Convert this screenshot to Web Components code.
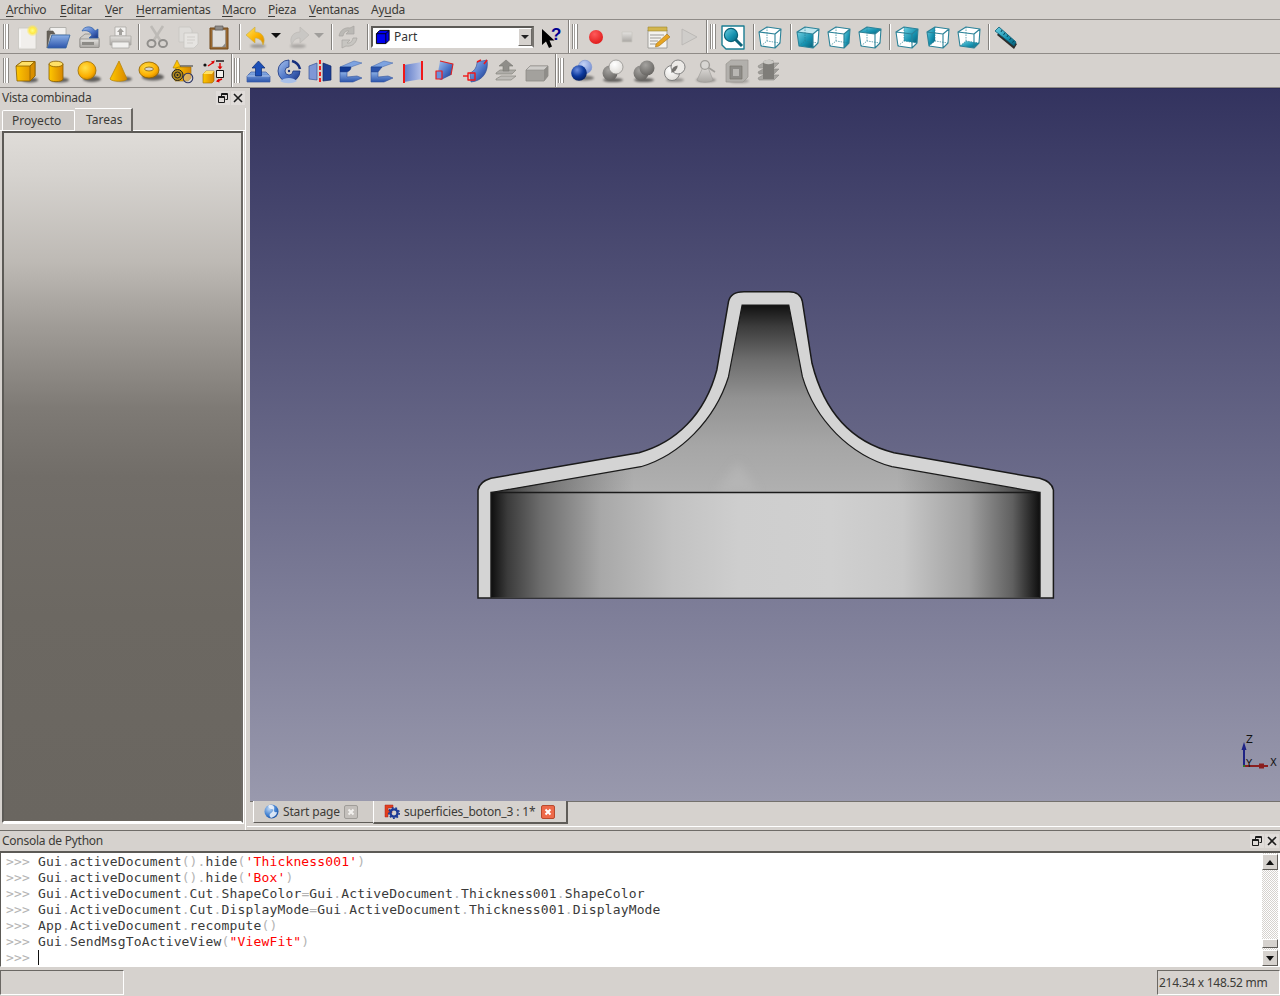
<!DOCTYPE html>
<html lang="es"><head><meta charset="utf-8"><title>FreeCAD</title>
<style>
html,body{margin:0;padding:0;background:#d6d2ce}
body{width:1280px;height:996px;overflow:hidden;font:12px "Noto Sans",sans-serif;color:#3c3b37}
</style></head><body>
<fc-app>
  <fc-menubar items="Archivo:0:54,Editar:0:45,Ver:0:31,Herramientas:0:86,Macro:0:46,Pieza:0:41,Ventanas:0:62,Ayuda:2:40"></fc-menubar>
  <fc-toolbar-row>
    <fc-handle w="12" pad="3"></fc-handle>
    <fc-tool icon="new"></fc-tool><fc-tool icon="open"></fc-tool><fc-tool icon="save"></fc-tool><fc-tool icon="print"></fc-tool>
    <fc-sep w="6" at="2"></fc-sep>
    <fc-tool icon="cut"></fc-tool><fc-tool icon="copy"></fc-tool><fc-tool icon="paste"></fc-tool>
    <fc-sep w="8" at="4"></fc-sep>
    <fc-tool icon="undo" w="26"></fc-tool><fc-tool icon="arrowblack" w="17" small></fc-tool>
    <fc-tool icon="redo" w="26"></fc-tool><fc-tool icon="arrowgrey" w="17" small></fc-tool>
    <fc-sep w="4" at="2"></fc-sep>
    <fc-tool icon="refresh" w="30"></fc-tool>
    <fc-sep w="8" at="4"></fc-sep>
    <fc-combo>Part</fc-combo>
    <fc-tool icon="whatsthis" w="34"></fc-tool>
    <fc-sep w="2" at="0" full></fc-sep>
    <fc-handle w="11" pad="2"></fc-handle>
    <fc-tool icon="record"></fc-tool><fc-tool icon="stop"></fc-tool><fc-tool icon="macro"></fc-tool><fc-tool icon="play"></fc-tool>
    <fc-sep w="2" at="1" full></fc-sep>
    <fc-handle w="11" pad="3"></fc-handle>
    <fc-tool icon="fit"></fc-tool>
    <fc-sep w="6" at="4"></fc-sep>
    <fc-tool icon="iso"></fc-tool>
    <fc-sep w="7" at="4"></fc-sep>
    <fc-tool icon="cfront"></fc-tool><fc-tool icon="cright"></fc-tool><fc-tool icon="ctop"></fc-tool>
    <fc-sep w="6" at="3"></fc-sep>
    <fc-tool icon="crear"></fc-tool><fc-tool icon="cleft"></fc-tool><fc-tool icon="cbottom"></fc-tool>
    <fc-sep w="6" at="3"></fc-sep>
    <fc-tool icon="ruler"></fc-tool>
  </fc-toolbar-row>
  <fc-toolbar-row>
    <fc-handle w="12" pad="3"></fc-handle>
    <fc-tool icon="box"></fc-tool><fc-tool icon="cyl"></fc-tool><fc-tool icon="sphere"></fc-tool><fc-tool icon="cone"></fc-tool><fc-tool icon="torus"></fc-tool><fc-tool icon="prims"></fc-tool><fc-tool icon="builder"></fc-tool>
    <fc-sep w="4" at="2" full></fc-sep>
    <fc-handle w="10" pad="1"></fc-handle>
    <fc-tool icon="extrude"></fc-tool><fc-tool icon="revolve"></fc-tool><fc-tool icon="mirror"></fc-tool><fc-tool icon="fillet"></fc-tool><fc-tool icon="chamfer"></fc-tool><fc-tool icon="ruled"></fc-tool><fc-tool icon="loft"></fc-tool><fc-tool icon="sweep"></fc-tool><fc-tool icon="offset"></fc-tool><fc-tool icon="section"></fc-tool>
    <fc-sep w="4" at="2" full></fc-sep>
    <fc-handle w="10" pad="1"></fc-handle>
    <fc-tool icon="bool"></fc-tool><fc-tool icon="bcut"></fc-tool><fc-tool icon="bunion"></fc-tool><fc-tool icon="bint"></fc-tool><fc-tool icon="check"></fc-tool><fc-tool icon="thick"></fc-tool><fc-tool icon="stack"></fc-tool>
  </fc-toolbar-row>
  <fc-workspace>
    <fc-combi-dock slot="left"></fc-combi-dock>
    <fc-viewer slot="view"></fc-viewer>
    <fc-doc-tabs slot="tabs"></fc-doc-tabs>
  </fc-workspace>
  <fc-dock-title>Consola de Python</fc-dock-title>
  <fc-console></fc-console>
  <fc-statusbar>214.34 x 148.52 mm</fc-statusbar>
</fc-app>
<script>
const DEFS=`<defs>
<linearGradient id="y" x1="0" y1="0" x2="1" y2="1"><stop offset="0" stop-color="#ffe566"/><stop offset=".55" stop-color="#fdb300"/><stop offset="1" stop-color="#d98a00"/></linearGradient>
<linearGradient id="yd" x1="0" y1="0" x2="1" y2="0"><stop offset="0" stop-color="#ffc800"/><stop offset="1" stop-color="#d88600"/></linearGradient>
<radialGradient id="ys" cx=".4" cy=".35" r=".7"><stop offset="0" stop-color="#ffe14a"/><stop offset=".7" stop-color="#fcae00"/><stop offset="1" stop-color="#c98200"/></radialGradient>
<linearGradient id="b" x1="0" y1="0" x2="1" y2="1"><stop offset="0" stop-color="#aac4ee"/><stop offset=".55" stop-color="#4b73c6"/><stop offset="1" stop-color="#17307e"/></linearGradient>
<linearGradient id="bv" x1="0" y1="0" x2="0" y2="1"><stop offset="0" stop-color="#8bb0e6"/><stop offset="1" stop-color="#2c55ac"/></linearGradient>
<linearGradient id="bh" x1="0" y1="0" x2="1" y2="0"><stop offset="0" stop-color="#5f7cc8"/><stop offset="1" stop-color="#b7c3ea"/></linearGradient>
<radialGradient id="bs" cx=".38" cy=".3" r=".75"><stop offset="0" stop-color="#6d8fe0"/><stop offset=".55" stop-color="#0d3a9e"/><stop offset="1" stop-color="#051c5a"/></radialGradient>
<radialGradient id="ls" cx=".4" cy=".3" r=".8"><stop offset="0" stop-color="#c5d3f5"/><stop offset="1" stop-color="#6a86cf"/></radialGradient>
<linearGradient id="t" x1="0" y1="0" x2="1" y2="1"><stop offset="0" stop-color="#6fd0e2"/><stop offset=".6" stop-color="#1490ae"/><stop offset="1" stop-color="#0a5f78"/></linearGradient>
<linearGradient id="g" x1="0" y1="0" x2="0" y2="1"><stop offset="0" stop-color="#e4e2df"/><stop offset="1" stop-color="#a9a6a2"/></linearGradient>
<radialGradient id="gs" cx=".4" cy=".3" r=".8"><stop offset="0" stop-color="#a5a3a0"/><stop offset="1" stop-color="#5f5d5a"/></radialGradient>
<radialGradient id="ws" cx=".4" cy=".3" r=".8"><stop offset="0" stop-color="#fff"/><stop offset="1" stop-color="#dcd9d4"/></radialGradient>
<radialGradient id="rd" cx=".4" cy=".3" r=".8"><stop offset="0" stop-color="#ff5a5a"/><stop offset="1" stop-color="#dc1414"/></radialGradient>
<radialGradient id="glow"><stop offset="0" stop-color="#ffff80"/><stop offset=".5" stop-color="#ffe94a"/><stop offset="1" stop-color="#ffe94a" stop-opacity="0"/></radialGradient>
<filter id="sh" x="-50%" y="-50%" width="200%" height="200%"><feGaussianBlur stdDeviation="1"/></filter>
</defs>`;
const sh=(cx,cy,rx,ry,o=.55)=>`<ellipse cx="${cx}" cy="${cy}" rx="${rx}" ry="${ry}" fill="#000" opacity="${o}" filter="url(#sh)"/>`;
const P=(d,f,s='none',w=1,x='')=>`<path d="${d}" fill="${f}" stroke="${s}" stroke-width="${w}" stroke-linejoin="round" ${x}/>`;
const L=s=>`<g transform="translate(-1 0)">${s}</g>`;
const cubeWire=(face)=>{
  const F={front:'M1 7L17 9V23L3 21Z',top:'M1 7L9 2L23 4L17 9Z',right:'M17 9L23 4L22 18L17 23Z',rear:'M9 2L23 4L22 18L9 16Z',left:'M1 7L9 2L9 16L3 21Z',bottom:'M3 21L9 16L22 18L17 23Z'};
  let extra=face==='front'?P('M1 7L9 2L23 4L17 9Z','#bfe6ee'):'';
  return `<path d="M1 7L9 2L23 4L22 18L17 23L3 21Z" fill="#fff"/>${extra}${face?P(F[face],'url(#t)'):''}
  <path d="M9 2V16M3 21L9 16L22 18" fill="none" stroke="#2a7f95" stroke-width=".7" stroke-dasharray="1.5 1"/>
  <path d="M1 7L9 2L23 4L22 18L17 23L3 21ZM1 7L17 9L23 4M17 9V23" fill="none" stroke="#2b8298" stroke-width="1.1" stroke-linejoin="round"/>`;
};
const I={
new:`${P('M3.5 3H21V24H3.5Z','#f1efec','#c9c6c1',.8)}<path d="M5 5V22" stroke="#fff"/><circle cx="17.5" cy="5.5" r="6" fill="url(#glow)"/>`,
open:`${P('M2 7L4 3H19V10H5Z','#cfcdca','#8a8884',.8)}${P('M4 2.5H20V10H4Z','#f2f1ef','#a5a39f',.7)}${P('M1 6H7L9 9H4L1 23Z','#66615a','#55514b',.5)}${P('M6 10H24L20 23H1.5Z','url(#bv)','#33639e',.8)}`,
save:`${P('M3 13L8 9H17L22 13V22H3Z','#cfcdc9','#8e8c88',.8)}${P('M3 14H22V22.5H3Z','url(#g)','#8e8c88',.8)}<rect x="5" y="17" width="12" height="3" fill="#8c8a86"/>${P('M5 6C7 1 15 0 18 6L21 4V13H12L15 10C13 6 9 5 5 6Z','url(#b)','#2d5fa8',.7)}`,
print:`${P('M7 2H18V11H7Z','#f3f2f0','#a9a7a3',.8)}${P('M12.5 3L16 7H14V10H11V7H9Z','#a3a19d')}${P('M2 11H23V20H2Z','url(#g)','#a9a7a3',.8)}${P('M4 17H21V23H4Z','#f1f0ee','#a9a7a3',.8)}`,
cut:`<g opacity=".95">${P('M6 1L15 15','none','#bcb9b5',2.6)}${P('M18 1L9 15','none','#bcb9b5',2.6)}<ellipse cx="6.5" cy="18.5" rx="4" ry="3.6" fill="none" stroke="#8d8b88" stroke-width="2"/><ellipse cx="18" cy="18.5" rx="4" ry="3.6" fill="none" stroke="#8d8b88" stroke-width="2"/></g>`,
copy:`${P('M3 2H14L16 5V17H3Z','#dedcd9','#c8c5c1',.8)}${P('M8 8H22V19L18 23H8Z','#e6e4e1','#c8c5c1',.8)}<path d="M11 12H19M11 15H19M11 18H17" stroke="#d0cdc9"/>`,
paste:`${P('M3 3H21V24H3Z','#9a6a32','#70481a',1)}${P('M5.5 5H18.5V22H5.5Z','#dfdedb','#8a8884',.5)}${P('M8 1H16V5H8Z','#8f8d8a','#5c5a57',.7)}${P('M15 22L18.5 18V22Z','#8b8986')}`,
undo:`${sh(14,21,8,2,.25)}${P('M11 2L2 10L11 18V13C15 13 18 15 19 20C22 14 19 7 11 7Z','url(#y)','#c9b04a',.7)}`,
redo:`${sh(11,21,8,2,.2)}${P('M13 2L22 10L13 18V13C9 13 6 15 5 20C2 14 5 7 13 7Z','#c9c7c4','#bbb9b5',.7)}`,
arrowblack:`${P('M0 0H10L5 5Z','#111')}`,
arrowgrey:`${P('M0 0H10L5 5Z','#a09e9b')}`,
refresh:`${P('M3 11C4 5 9 2 14 3L18 1V9H10L13 6C10 5.5 8 7 7 11Z','#bbb9b5','#a7a5a1',.7)}${P('M21 13C20 19 15 22 10 21L6 23V15H14L11 18C14 18.5 16 17 17 13Z','#c7c5c1','#a7a5a1',.7)}`,
part:`${P('M1.5 5L5 1.5H15V12L11.5 15.5H1.5Z','#0000f0','#000',1)}${P('M1.5 5H11.5V15.5','none','#000',.9)}<path d="M11.5 5L15 1.5" stroke="#000"/>`,
whatsthis:`${P('M3 4V20L7 16.5L10 23L13 21.5L10.5 15.5H15.5Z','#000')}<text x="12" y="15" font-family="Liberation Sans" font-weight="700" font-size="17" fill="#000090">?</text>`,
record:`<circle cx="12" cy="12" r="7" fill="url(#rd)"/>`,
stop:`${P('M7 7H17V17H7Z','url(#g)','#c9c6c2',.8)}`,
macro:`${P('M2 5H21V23H2Z','#f4f3f0','#9a9894',.9)}${P('M2 2H21V6H2Z','#d3b64d','#9c8730',.6)}<path d="M4 10H18M4 13H15M4 16H12M4 19H10" stroke="#9d9b97"/>${P('M10 19L21 9L24 12L13 21L9.5 22Z','#e7a523','#a0701a',.6)}`,
play:`${P('M5 4L20 12L5 20Z','#cfcdca','#b9b7b3',.9)}`,
fit:`${P('M1 1H23V24H5L1 20Z','#fff','#1a7d92',1.4)}<circle cx="10" cy="10" r="6.6" fill="url(#t)" stroke="#0a6278" stroke-width="1.2"/>${P('M14.5 14.5L21 21','none','#0a6278',3)}`,
iso:cubeWire(''),cfront:cubeWire('front'),cright:cubeWire('right'),ctop:cubeWire('top'),crear:cubeWire('rear'),cleft:cubeWire('left'),cbottom:cubeWire('bottom'),
ruler:`${P('M6 6L23 19L20 24L3 10Z','#2e2c2a')}${P('M5 2L22 17L20 21L1 6Z','url(#t)','#0a5c74',.8)}<path d="M8 5L7 7M11 7.6L9.5 10M14 10.2L13 12M17 13L15.5 15M20 15.6L18.5 17.6" stroke="#063d50" stroke-width=".9"/>`,
box:L(`${sh(16,21,8,2.5)}${P('M2 7L8 2.5H21V17L16 22H3Z','url(#yd)','#8a5f00',.8)}${P('M2 7L8 2.5H21L16 7Z','#ffe066','#8a5f00',.8)}${P('M16 7V22L21 17V2.5Z','#d98f00','#8a5f00',.8)}`),
cyl:L(`${sh(15,21,9,2.5)}${P('M4 5V20C4 23.5 18 23.5 18 20V5Z','url(#yd)','#8a5f00',.8)}<ellipse cx="11" cy="5" rx="7" ry="2.8" fill="#ffe066" stroke="#8a5f00" stroke-width=".8"/>`),
sphere:L(`${sh(16,20,9,3)}<circle cx="11" cy="11.5" r="9" fill="url(#ys)" stroke="#9a6c00" stroke-width=".8"/>`),
cone:L(`${sh(16,20,9,2.5)}${P('M12 2L3 20C5 23 18 23 20 20Z','url(#yd)','#b8860b',.8)}`),
torus:L(`${sh(15,18,11,3.6)}<ellipse cx="11" cy="11" rx="10" ry="8" fill="url(#ys)" stroke="#8a5f00" stroke-width=".8"/><ellipse cx="11" cy="10" rx="4.4" ry="2" fill="#d8d4cf" stroke="#8a5f00" stroke-width=".8"/>`),
prims:`${P('M7 1L3 9H11Z','#ffc400','#a87a00',.6)}<path d="M10 7H23" stroke="#333" stroke-width="1"/>${P('M5 10L8 8H21V19L18 22H5Z','url(#yd)','#9a6c00',.6)}<circle cx="7.5" cy="16" r="5.5" fill="#b08a1e" stroke="#222"/><circle cx="7.5" cy="16" r="3" fill="none" stroke="#222"/><circle cx="7.5" cy="16" r="1" fill="#222"/><circle cx="18" cy="19" r="4.8" fill="#d4d0cb" fill-opacity=".45" stroke="#2c3566" stroke-width="1.1"/>`,
builder:`${P('M2 15L5 12H13V22L11 24H2Z','url(#yd)','#9a6c00',.6)}${P('M2 15L5 12H13L11 15Z','#ffe066')}<circle cx="4" cy="6" r="1.6" fill="#111"/>${P('M7 7L13 3','none','#e00000',1.4)}${P('M14 1.5L12 5L10 2.5Z','#e00000')}${P('M15 2H23','none','#111',1.4)}${P('M19 4V8','none','#e00000',1.4)}${P('M16.5 7.5H21.5L19 10.5Z','#e00000')}${P('M15.5 11.5H22.5V18.5H15.5Z','#f2f0ed','#111',1)}${P('M16 22L21 20','none','#e00000',1.4)}${P('M15 22.5L18 19.5L18.5 23.5Z','#e00000')}`,
extrude:`${P('M1 17L5 13H20L24 17V23H1Z','url(#bv)','#3a5aa0',.7)}${P('M1 17H24','none','#c5d5f2',.8)}${P('M12.5 2L19 9H15.5V17H9.5V9H6Z','#1d50b8','#0d2c74',.7)}`,
revolve:`${P('M12 1A11 11 0 1 0 23 12H16A4 4 0 1 1 12 8Z','url(#b)','#18347e',.8)}<path d="M3 22C8 18 16 18 20 22C15 25 8 25 3 22Z" fill="#a9c0e8"/><path d="M15 2C19 3 22 6 23 10" stroke="#17307e" stroke-width="2.6" fill="none"/><circle cx="12" cy="12" r="1.2" fill="#17307e"/>`,
mirror:`${P('M1 7L9 4V21L1 20Z','#7f97d6','#33539a',.7)}${P('M15 4L23 7V21L15 22Z','#1e3f94','#0e2668',.7)}<path d="M12 1V24" stroke="#f02020" stroke-width="2" stroke-dasharray="4 2"/>`,
fillet:`${P('M1 8L15 2L23 4L12 8Z','#7ea3e0','#3b60aa',.5)}${P('M1 8H12C12 11 10 12 8 13H1Z','#123a94','#0e2c78',.5)}${P('M1 13H8V18L18 17L23 19L14 23H1Z','url(#bv)','#33539a',.6)}`,
chamfer:`${P('M1 8L14 2L23 4L12 8Z','#7ea3e0','#3b60aa',.5)}${P('M1 8H12L8 13H1Z','#2b54ac','#1b3c8a',.5)}${P('M1 13H8V18L18 17L23 19L14 23H1Z','url(#bv)','#33539a',.6)}`,
ruled:`${P('M3 6L21 3V20L3 23Z','url(#bh)')}<path d="M3 5V24M21 2V21" stroke="#f01818" stroke-width="2"/>`,
loft:`${P('M8 2L21 5L19 16L9 21L5 19Z','url(#b)')}${P('M8 2L21 5L19 16','none','#e02020',1.1)}${P('M4 12H10V20H4Z','#6a92dc','#f01818',1.2)}`,
sweep:`${P('M7 14C12 12 14 7 14 3L24 1C26 12 20 22 8 23Z','url(#b)','#2d4a92',.6)}<path d="M14 3L18 1M24 1L21 5" stroke="#f01818" stroke-width="1.5" fill="none"/><path d="M0 17H5" stroke="#f01818" stroke-width="1.4"/>${P('M5 14H12V21H5Z','none','#f01818',1.4)}`,
offset:`${P('M2 20L7 17H22L17 21H2Z','#bdbbb7','#88867f',.7)}${P('M2 14L6 11H22L18 15H2Z','#aeaca8','#88867f',.7)}${P('M12 1L19 7H15V12H9V7H5Z','#8f8d89','#7a7874',.6)}`,
section:`${P('M1 11L5 7H23V17L19 22H1Z','#a3a19d','#8d8b87',.8)}${P('M1 11L5 7H23L19 11Z','#cfcdca','#8d8b87',.6)}${P('M19 11V22L23 17V7Z','#8f8d89')}`,
bool:`<circle cx="15" cy="8" r="6.8" fill="url(#ls)" stroke="#7b93d0" stroke-width=".6"/>${sh(14,19,10,2.5,.45)}<circle cx="9" cy="14" r="7.8" fill="url(#bs)"/>`,
bcut:`${sh(12,21,10,2)}<circle cx="9" cy="14" r="7.5" fill="url(#gs)"/><circle cx="15" cy="8" r="7" fill="url(#ws)" stroke="#8a8885" stroke-width=".7"/>`,
bunion:`${sh(12,21,10,2)}<circle cx="9" cy="14" r="7.5" fill="url(#gs)"/><circle cx="15" cy="9" r="7.5" fill="url(#gs)"/>`,
bint:`${sh(12,21,9,2,.3)}<circle cx="9" cy="14" r="7.5" fill="url(#ws)" stroke="#777" stroke-width=".9"/><circle cx="15" cy="8" r="7" fill="#eceae7" stroke="#777" stroke-width=".9"/><path d="M14.7 6.5A7 7 0 0 0 8.2 13.8A7.5 7.5 0 0 0 14.7 6.5Z" fill="#73716e"/>`,
check:`${sh(12,21,10,2,.35)}${P('M10 6L3 21C6 24 16 24 19 21L13 6Z','url(#g)','#9a9895',.6)}<circle cx="11" cy="6" r="4.4" fill="#d8d6d3" stroke="#a09e9a" stroke-width="1.4"/><path d="M15 9L21 13" stroke="#a09e9a" stroke-width="1.6"/>`,
thick:`${sh(14,22,10,2,.25)}${P('M1 5L6 1H23V18L18 23H1Z','#b2b0ac','#98968f',.7)}${P('M5 7H17V20H5Z','#8e8c88','#79776f',.7)}${P('M8 10H14V17H8Z','#b9b7b3')}`,
stack:`${P('M2 7L7 4H23L18 9H3Z','#a8a6a2','#8c8a86',.6)}${P('M2 13L7 10H23L18 15H3Z','#9e9c98','#8c8a86',.6)}${P('M2 19L7 16H23L18 21H3Z','#a8a6a2','#8c8a86',.6)}<path d="M7 3C9 0 18 0 18 3V20H7Z" fill="#7f7d79"/><ellipse cx="12.5" cy="3" rx="5.5" ry="2.2" fill="#c9c7c3"/>`
};
const icon=(n,s=24,vb=24)=>`<svg xmlns="http://www.w3.org/2000/svg" width="${s}" height="${s}" viewBox="0 0 ${vb} ${vb}" style="display:block;overflow:visible">${DEFS}${I[n]}</svg>`;

class Shadow extends HTMLElement{
  connectedCallback(){ if(!this.shadowRoot){ this.attachShadow({mode:'open'}).innerHTML=this.render(); } }
}
const def=(name,render)=>customElements.define(name,class extends Shadow{render(){return render.call(this)}});
const bg='#d6d2ce';

def('fc-app',()=>`<style>:host{display:flex;flex-direction:column;width:1280px;height:996px;background:${bg};overflow:hidden}</style><slot></slot>`);

def('fc-menubar',function(){
  const items=this.getAttribute('items').split(',').map(s=>{const [t,u,w]=s.split(':');
    const i=+u;return `<span style="width:${w}px">${t.slice(0,i)}<u>${t[i]}</u>${t.slice(i+1)}</span>`}).join('');
  return `<style>:host{display:flex;height:19px;padding-left:6px;border-bottom:1px solid #8f8b87;font:12px/19px "Noto Sans",sans-serif;color:#3c3b37;box-sizing:content-box;letter-spacing:-.25px}
  span{flex:none;display:block;white-space:nowrap}u{text-underline-offset:2px}</style>${items}`;
});

def('fc-toolbar-row',()=>`<style>:host{display:flex;align-items:center;height:33px;border-bottom:1px solid #8f8b87;flex:none}</style><slot></slot>`);

def('fc-handle',function(){
  const w=this.getAttribute('w'),p=this.getAttribute('pad');
  return `<style>:host{display:block;flex:none;width:${w}px;box-sizing:border-box;padding-left:${p}px}
  div{width:6px;height:25px;box-sizing:border-box;border-left:1px solid #8d8a86;border-right:1px solid #8d8a86;background:linear-gradient(90deg,#fff 0 1.5px,#a3a09c 1.5px 2.5px,#fff 2.5px 4px)}</style><div></div>`;
});

def('fc-sep',function(){
  const w=this.getAttribute('w'),a=this.getAttribute('at');
  const full=this.hasAttribute('full');
  return `<style>:host{display:block;flex:none;width:${w}px;height:${full?33:26}px;position:relative}
  i{display:block;position:absolute;left:${a}px;top:0;bottom:0;width:1px;background:#84817d;box-shadow:1px 0 0 #fff}</style><i></i>`;
});

def('fc-tool',function(){
  const w=+(this.getAttribute('w')||31), n=this.getAttribute('icon');
  const small=this.hasAttribute('small');
  const pad=small?Math.floor((w-10)/2)-1:Math.floor((w-24)/2);
  return `<style>:host{display:flex;align-items:center;flex:none;width:${w}px;height:24px;box-sizing:border-box;padding-left:${pad}px}</style>${small?`<svg width="10" height="5" viewBox="0 0 10 5" style="display:block;margin-top:-2px">${I[n]}</svg>`:icon(n)}`;
});

def('fc-combo',function(){
  return `<style>:host{display:flex;align-items:center;flex:none;width:163px;height:22px;box-sizing:border-box;background:#fff;border:2px solid;border-color:#5c5a56 #77746f #fff #5c5a56;font:12px "Noto Sans",sans-serif;color:#333;position:relative}
  .ic{margin-left:2px;margin-right:3px}
  .txt{flex:1}
  .btn{width:14px;height:18px;box-sizing:border-box;background:${bg};border:1px solid;border-color:#fff #6b6864 #6b6864 #fff;display:flex;align-items:center;justify-content:center}
  .btn i{width:0;height:0;border:4px solid transparent;border-top:4px solid #222;border-bottom:0;display:block}</style>
  <span class="ic">${icon('part',16,17)}</span><span class="txt"><slot></slot></span><span class="btn"><i></i></span>`;
});

def('fc-workspace',()=>`<style>:host{display:grid;grid-template-columns:250px 1fr;grid-template-rows:713px 29px;flex:none;border-bottom:1px solid #6f6c68;box-sizing:border-box;height:743px}
  .l{grid-row:1/3;grid-column:1;display:flex;min-height:0}
  ::slotted(fc-viewer){grid-column:2;grid-row:1}::slotted(fc-doc-tabs){grid-column:2;grid-row:2}
  </style><div class="l"><slot name="left"></slot></div><slot name="view"></slot><slot name="tabs"></slot>`);

def('fc-dock-title',function(){
  return `<style>:host{display:flex;align-items:center;flex:none;height:20px;padding-left:2px;font:12px "Noto Sans",sans-serif;letter-spacing:-.25px;color:#3c3b37;position:relative}
  .t{flex:1;line-height:20px}
  .b{display:flex;gap:1px;padding-right:1px}
  .b span{display:block;width:14px;height:14px;background:#e0dcd9;display:flex;align-items:center;justify-content:center}</style>
  <span class="t"><slot></slot></span><span class="b">
  <span><svg width="10" height="10" viewBox="0 0 10 10"><path d="M3.5 .5H9.5V6.5H7.5M.5 3.5H6.5V9.5H.5ZM3.5 .5V3.5M.5 3.5V5M.5 4.5H6.5M3.5 1.5H9.5" fill="none" stroke="#1c1c1c"/></svg></span>
  <span><svg width="10" height="10" viewBox="0 0 10 10"><path d="M1 1L9 9M9 1L1 9" stroke="#1c1c1c" stroke-width="1.6"/></svg></span></span>`;
});

def('fc-combi-dock',()=>`<style>:host{display:flex;flex-direction:column;width:250px;box-sizing:border-box;border-right:4px solid ${bg};position:relative;font:12px "Noto Sans",sans-serif;color:#3c3b37}
  .tabs{display:flex;height:23px;align-items:flex-end;box-sizing:border-box;padding-left:2px;border-bottom:1px solid #fff;flex:none}
  .tab{display:block;box-sizing:border-box;flex:none}
  .p{width:73px;height:20px;border:1px solid #fff;border-bottom:0;border-radius:2px 2px 0 0;padding-left:9px;line-height:20px;background:#cdc9c5;margin-bottom:0}
  .a{width:58px;height:23px;border-top:1px solid #fff;border-right:2px solid #6a6763;background:${bg};padding-left:11px;line-height:21px;margin-bottom:-1px;z-index:1}
  .frame{height:688px;flex:none;box-sizing:content-box;margin:0 2px 0 2px;border:2px solid;border-color:#5c5a56 #6d6a66 #fff #5c5a56;background:linear-gradient(180deg,#dfdcd8 0,#d6d3cf 6%,#bdb9b4 19%,#a09c97 28%,#7e7a75 40%,#716d68 50%,#6c6862 70%,#6a6660 100%);box-shadow:1px 1px 0 #fff}
  .wrap{display:flex;flex-direction:column;flex:1;min-height:0;border-right:1px solid #fff}
  </style><fc-dock-title>Vista combinada</fc-dock-title>
  <div class="wrap"><div class="tabs"><span class="tab p">Proyecto</span><span class="tab a">Tareas</span></div><div class="frame"></div></div>`);

def('fc-viewer',()=>{
 const outer='M478 598V490Q479.5 481.7 491 478.3L639 452.7C675 443 705 415 716.8 370L728.5 301.7Q730.4 291.7 744 291.7H788.8Q800.5 291.7 802.4 301.7L812 363.3C825 415 855 443 893.9 452.7L1039.7 478.3Q1052 481.7 1053.4 490V598Z';
 const inner='M491 492.5L640.9 466.7C680 455 715 420 728.5 376.7L742.1 305H788.8L802.4 376.7C815 420 850 455 891.9 466.7L1039.8 492.5Z';
 return `<style>:host{display:block;background:linear-gradient(180deg,#33335f 0,#9999ad 100%);width:1030px;height:713px;overflow:hidden;box-shadow:inset 0 1px 0 #2b2b55}
 svg{display:block}
 text{font-family:"DejaVu Sans",sans-serif;font-size:10px;fill:#111}</style>
 <svg width="1030" height="713" viewBox="250 88 1030 713">
 <defs>
 <filter id="bl" x="-50%" y="-50%" width="200%" height="200%"><feGaussianBlur stdDeviation="5"/></filter>
 <linearGradient id="cone" gradientUnits="userSpaceOnUse" x1="0" y1="304" x2="0" y2="492"><stop offset="0" stop-color="#0f0f0f"/><stop offset=".12" stop-color="#3c3c3c"/><stop offset=".3" stop-color="#6e6e6e"/><stop offset=".5" stop-color="#929292"/><stop offset=".75" stop-color="#a6a6a6"/><stop offset="1" stop-color="#b0b0b0"/></linearGradient>
 <linearGradient id="coneL" gradientUnits="userSpaceOnUse" x1="491" y1="0" x2="1040" y2="0"><stop offset="0" stop-color="#222" stop-opacity=".95"/><stop offset=".1" stop-color="#444" stop-opacity=".55"/><stop offset=".26" stop-color="#555" stop-opacity="0"/><stop offset=".74" stop-color="#555" stop-opacity="0"/><stop offset=".9" stop-color="#444" stop-opacity=".55"/><stop offset="1" stop-color="#222" stop-opacity=".95"/></linearGradient>
 <linearGradient id="wall" gradientUnits="userSpaceOnUse" x1="491" y1="0" x2="1040" y2="0"><stop offset="0" stop-color="#0e0e0e"/><stop offset=".03" stop-color="#3b3b3b"/><stop offset=".09" stop-color="#6c6c6c"/><stop offset=".2" stop-color="#a8a8a8"/><stop offset=".33" stop-color="#c2c2c2"/><stop offset=".45" stop-color="#cecece"/><stop offset=".62" stop-color="#d0d0d0"/><stop offset=".75" stop-color="#c8c8c8"/><stop offset=".87" stop-color="#a0a0a0"/><stop offset=".95" stop-color="#606060"/><stop offset="1" stop-color="#0e0e0e"/></linearGradient>
 </defs>
 <path d="${outer}" fill="#d4d4d4" stroke="#1a1a1a" stroke-width="1.5"/>
 <path d="${inner}" fill="url(#cone)"/>
 <path d="${inner}" fill="url(#coneL)"/>
 <path d="M738 462L758 492H716Z" fill="#bcbcbc" opacity=".5" filter="url(#bl)"/>
 <path d="${inner}" fill="none" stroke="#1a1a1a" stroke-width="1.2"/>
 <rect x="491" y="492.5" width="549" height="105" fill="url(#wall)"/>
 <path d="M491 597.5V492.5H1040V597.5" fill="none" stroke="#1a1a1a" stroke-width="1.4"/>
 <path d="M1244 765V745" stroke="#1f2385" stroke-width="2"/><path d="M1244 742L1246.5 750H1241.5Z" fill="#1f2385"/>
 <path d="M1244 766H1268" stroke="#8a1f1f" stroke-width="2"/><path d="M1259 763.5H1264V768.5H1259Z" fill="#8a1f1f"/><path d="M1243 765h2v2h-2z" fill="#2a7a2a"/>
 <text x="1246" y="743">Z</text><text x="1246" y="767">Y</text><text x="1270" y="766">X</text>
 </svg>`;
});

def('fc-doc-tabs',()=>{
 const globe=`<svg width="15" height="15" viewBox="0 0 15 15"><defs><radialGradient id="gl" cx=".35" cy=".3" r=".8"><stop offset="0" stop-color="#bcd7f5"/><stop offset=".6" stop-color="#3f7fd0"/><stop offset="1" stop-color="#174b9a"/></radialGradient></defs><circle cx="7.5" cy="7.5" r="7" fill="url(#gl)"/><path d="M5 1C3 3 6 5 8 5S9 8 7 9 5 12 7 14C10 13 13 11 13 8 11 9 9 7 10 5S9 1 7 1Z" fill="#f2f6fc" opacity=".85"/></svg>`;
 const fc=`<svg width="16" height="15" viewBox="0 0 16 15"><path d="M1 1H9V4H4V6H8V9H4V13H1Z" fill="#e2401e" stroke="#a22" stroke-width=".5"/><circle cx="10" cy="9" r="3.6" fill="none" stroke="#1c3a96" stroke-width="2.4"/><circle cx="10" cy="9" r="5.2" fill="none" stroke="#1c3a96" stroke-width="1.6" stroke-dasharray="1.8 1.8"/></svg>`;
 const cl=(c,b,x)=>`<svg width="14" height="14" viewBox="0 0 14 14"><rect x=".5" y=".5" width="13" height="13" rx="1.5" fill="${c}" stroke="${b}"/><path d="M4.5 4.5L9.5 9.5M9.5 4.5L4.5 9.5" stroke="${x}" stroke-width="2"/></svg>`;
 return `<style>:host{display:flex;align-items:flex-start;padding-left:3px;height:29px;width:1030px;box-sizing:border-box;font:12px "Noto Sans",sans-serif;color:#3c3b37;letter-spacing:-.15px;border-top:1px solid #74716d;background:${bg};position:relative}
 :host::after{content:"";position:absolute;left:-3px;right:0;top:24px;height:1px;background:#fff}
 span{display:flex;align-items:center;box-sizing:border-box;flex:none}
 .a{width:120px;height:22px;padding-left:10px;border-bottom:1px solid #5f5c58;border-left:1px solid #fff;margin-top:-1px;background:#d0ccc8}
 .a b{font-weight:400;margin-left:4px;width:61px;display:block;white-space:nowrap}
 .s{width:195px;height:23px;margin-top:-1px;padding-left:10px;border-left:1px solid #fff;border-right:2px solid #5f5c58;border-bottom:2px solid #5f5c58;background:${bg}}
 .s b{font-weight:400;margin-left:4px;width:137px;display:block;white-space:nowrap}
 </style><span class="a">${globe}<b>Start page</b>${cl('#c4c0bc','#a09d99','#f2f0ee')}</span><span class="s">${fc}<b>superficies_boton_3 : 1*</b>${cl('#ee6a4a','#b84a2e','#fff')}</span>`;
});

def('fc-console',()=>{
 const p=s=>`<i>${s}</i>`, r=s=>`<em>${s}</em>`;
 const lines=[
  `Gui${p('.')}activeDocument${p('().')}hide${p('(')}${r("'Thickness001'")}${p(')')}`,
  `Gui${p('.')}activeDocument${p('().')}hide${p('(')}${r("'Box'")}${p(')')}`,
  `Gui${p('.')}ActiveDocument${p('.')}Cut${p('.')}ShapeColor${p('=')}Gui${p('.')}ActiveDocument${p('.')}Thickness001${p('.')}ShapeColor`,
  `Gui${p('.')}ActiveDocument${p('.')}Cut${p('.')}DisplayMode${p('=')}Gui${p('.')}ActiveDocument${p('.')}Thickness001${p('.')}DisplayMode`,
  `App${p('.')}ActiveDocument${p('.')}recompute${p('()')}`,
  `Gui${p('.')}SendMsgToActiveView${p('(')}${r('"ViewFit"')}${p(')')}`,
  `<u></u>`
 ].map(l=>`<div>${p('&gt;&gt;&gt; ')}${l}</div>`).join('');
 return `<style>:host{display:flex;flex:none;height:116px;box-sizing:border-box;border-top:2px solid #5c5a56;border-left:1px solid #5c5a56;border-bottom:1px solid #fff;background:#fff;position:relative}
 .t{flex:1;padding:1px 0 0 5px;font:13px/16px "DejaVu Sans Mono",monospace;letter-spacing:.155px;color:#3a3a3a;white-space:pre}
 .t div{height:16px}
 i{font-style:normal;color:#b4b4b4}em{font-style:normal;color:#f00}
 u{display:inline-block;width:1px;height:15px;background:#111;vertical-align:-3px;text-decoration:none}
 .sb{width:16px;margin-right:2px;display:flex;flex-direction:column;padding-top:1px;box-sizing:border-box;background:repeating-conic-gradient(#d6d2ce 0 25%,#fff 0 50%) 0 0/2px 2px}
 .btn{height:16px;box-sizing:border-box;flex:none;background:${bg};border:1px solid;border-color:#fff #5f5c58 #5f5c58 #fff;display:flex;align-items:center;justify-content:center}
 .btn i{display:block;width:0;height:0;border:4px solid transparent}
 .up i{border-bottom:5px solid #111;border-top:0}.dn i{border-top:5px solid #111;border-bottom:0}
 .th{flex:1}.sl{height:9px;flex:none;background:${bg};border:1px solid;border-color:#fff #5f5c58 #5f5c58 #fff;box-sizing:border-box;margin-bottom:2px}
 </style><div class="t">${lines}</div><div class="sb"><div class="btn up"><i></i></div><div class="th"></div><div class="sl"></div><div class="btn dn"><i></i></div></div>`;
});

def('fc-statusbar',()=>`<style>:host{display:flex;flex:1;align-items:flex-start;justify-content:space-between;padding-top:3px;font:12px "Noto Sans",sans-serif;color:#3c3b37;letter-spacing:-.27px}
 span{display:block;box-sizing:border-box;height:25px;border:1px solid;border-color:#6b6864 #fff #fff #6b6864;line-height:24px}
 .l{width:124px}.r{width:123px;padding-left:1px;white-space:nowrap}</style><span class="l"></span><span class="r"><slot></slot></span>`);
</script>
</body></html>
